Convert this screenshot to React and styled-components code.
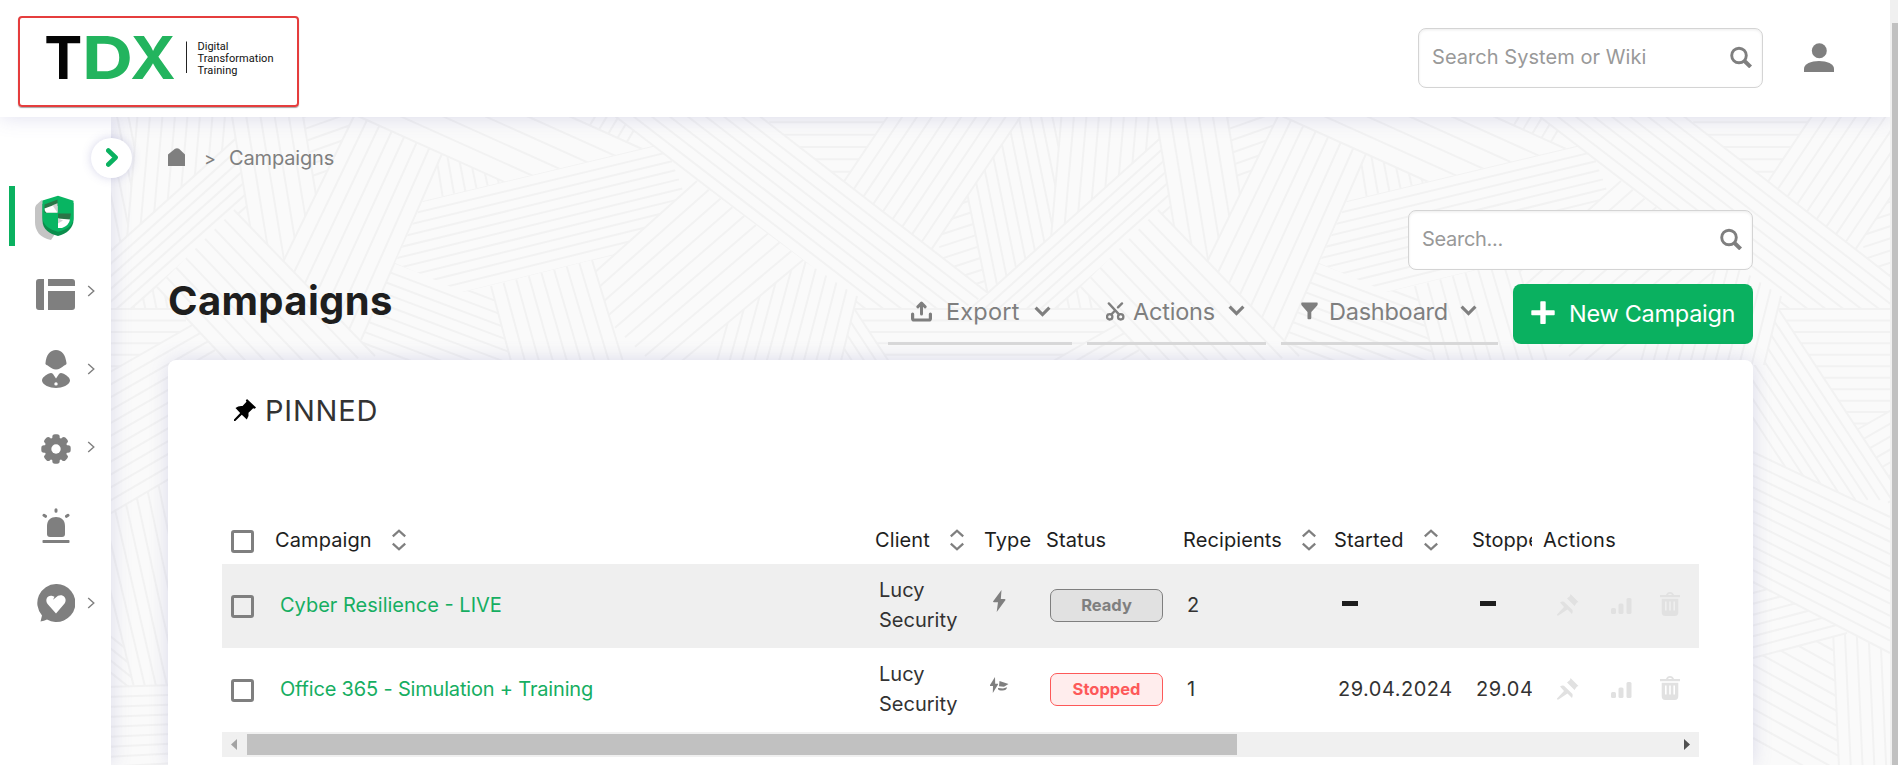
import React from 'react';
import styled, { createGlobalStyle, css } from 'styled-components';

const GlobalStyle = createGlobalStyle`
  *, *::before, *::after { box-sizing: border-box; }
  html, body { margin: 0; padding: 0; height: 100%; overflow: hidden; background: #fafafa; }
  body { font-family: Inter, "Liberation Sans", sans-serif; color: #1e1e1e; }
`;

const gray = '#7f7f7f';
const green = '#0ab160';
const softShadow = '0 0 20px rgba(90, 90, 170, 0.2)';

/* ---------- background pattern ---------- */

const TILE = 924;

// Each band: first line, last line, number of lines, optional outline.
const tileBands = [
  [[765, 110, 890, 110], [790, 184, 890, 184], 7],
  [[935, 212, 978, 198], [945, 294, 988, 280], 8],
  [[950, 110, 991, 310], [1051, 110, 1092, 310], 10],
  [[837, 192, 892, 110], [925, 259, 1025, 110], 10],
  [[1062, 110, 1050, 250], [1162, 110, 1150, 250], 9],
  [[295, 120, 360, 97], [295, 182, 360, 159], 6],
  [[575, 150, 602, 105], [622, 150, 649, 105], 5],
  [[436, 155, 444, 205], [492, 155, 504, 205], 6],
  [[970, 309, 1165, 134], [1050, 313, 1172, 205], 7],
  [[1155, 110, 1180, 262], [1226, 110, 1251, 262], 6],
  [[385, 259, 520, 310], [350, 338, 520, 402], 9],
  [[357, 110, 245, 340], [461, 110, 361, 340], 8],
  [[340, 108, 540, 198], [460, 67, 660, 157], 6],
  [[385, 210, 665, 143], [385, 312, 700, 234], 11, '423,201 665,143 700,234 463,292 395,263'],
  [[598, 103, 910, 343], [740, 101, 988, 293], 9],
  [[850, 309, 1110, 309], [880, 435, 1110, 435], 12],
  [[5, 432, 215, 312], [60, 543, 215, 452], 12],
  [[855, 310, 980, 500], [758, 310, 883, 500], 9],
  [[857, 296, 840, 365], [754, 228, 716, 365], 11],
  [[697, 181, 575, 290], [803, 260, 665, 375], 10],
  [[491, 286, 512, 365], [592, 260, 624, 365], 9],
  [[234, 210, 375, 356], [157, 287, 240, 375], 9],
];

const edgeBands = [
  [[1753, 606, 1838, 653], [1753, 738, 1838, 785], 10],
  [[1833, 630, 1839, 767], [1892, 630, 1898, 767], 6],
  [[1753, 593, 1847, 568], [1753, 658, 1847, 633], 7],
  [[1753, 452, 1890, 517], [1753, 582, 1890, 653], 12],
];

const lowerLeftBands = [
  [[100, 628, 135, 656], [100, 664, 135, 692], 4],
  [[88, 500, 134, 687], [188, 450, 234, 687], 10],
  [[105, 687, 175, 685], [105, 767, 175, 763], 9],
];

function Band({ band, shift = 0 }) {
  const [first, last, count, outline] = band;
  const points =
    outline ||
    `${first[0]},${first[1]} ${first[2]},${first[3]} ${last[2]},${last[3]} ${last[0]},${last[1]}`;
  const id = `band-${first.join('-')}-${shift}`;
  const lines = Array.from({ length: count }, (_, i) => {
    const t = i / (count - 1);
    const [x1, y1, x2, y2] = first.map((v, k) => v + (last[k] - v) * t);
    return `M${x1} ${y1}L${x2} ${y2}`;
  }).join('');
  return (
    <g transform={`translate(${shift} 0)`}>
      <clipPath id={id}><polygon points={points} /></clipPath>
      <polygon points={points} fill="#fafafa" />
      <path d={lines} clipPath={outline ? `url(#${id})` : undefined} stroke="#f2f2f2" strokeWidth="2" fill="none" />
    </g>
  );
}

const Backdrop = styled.svg`
  position: absolute;
  inset: 0;
  z-index: 0;
`;

function Pattern() {
  return (
    <Backdrop width="1898" height="765" viewBox="0 0 1898 765">
      {lowerLeftBands.map((b, i) => <Band key={`l${i}`} band={b} />)}
      {tileBands.map((b, i) =>
        [-TILE, 0, TILE, 2 * TILE].map((s) => <Band key={`${i}-${s}`} band={b} shift={s} />)
      )}
      {edgeBands.map((b, i) => <Band key={`e${i}`} band={b} />)}
    </Backdrop>
  );
}

/* ---------- shell ---------- */

const Page = styled.div`
  position: relative;
  width: 1898px;
  height: 765px;
  overflow: hidden;
  display: flex;
`;
const Shell = styled.div`
  position: relative;
  z-index: 1;
  width: 1890px;
  display: flex;
  flex-direction: column;
`;
const PageScroll = styled.div`
  position: relative;
  z-index: 1;
  width: 8px;
  padding: 23px 0 0 2px;
  background: #f0f0f0;
`;
const PageThumb = styled.div`
  height: 100%;
  background: #c1c1c1;
`;
const Header = styled.header`
  position: relative;
  z-index: 2;
  flex: none;
  height: 117px;
  padding: 16px 56px 0 18px;
  display: flex;
  align-items: flex-start;
  background: #fff;
  box-shadow: ${softShadow};
`;
const LogoFrame = styled.div`
  width: 281px;
  height: 91px;
  border: 2px solid #e53d3d;
  border-radius: 4px;
  box-shadow: 0 1px 1px rgba(0, 0, 0, 0.35);
`;
const Spacer = styled.div`
  flex: 1;
`;
const SearchBox = styled.label`
  width: 345px;
  height: 60px;
  padding: 0 10px 2px 13px;
  display: flex;
  align-items: center;
  justify-content: space-between;
  background: #fff;
  border: 1px solid #d4d4d4;
  border-radius: 8px;
  box-shadow: inset 0 1px 3px rgba(0, 0, 0, 0.08);
  font-size: 20px;
  letter-spacing: ${(p) => p.$track || 0}px;
  color: #999;
`;
const HeaderSearch = styled.div`
  margin: 12px 41px 0 0;
`;
const UserButton = styled.div`
  margin-top: 27px;
  width: 30px;
  display: flex;
`;
const Body = styled.div`
  flex: 1;
  display: flex;
  min-height: 0;
`;

/* ---------- sidebar ---------- */

const Sidebar = styled.nav`
  position: relative;
  width: 111px;
  padding-top: 69px;
  background: #fff;
  box-shadow: ${softShadow};
`;
const SideToggle = styled.div`
  position: absolute;
  left: 91px;
  top: 21px;
  width: 41px;
  height: 40px;
  padding: 0 0 2px 3px;
  border-radius: 50%;
  background: #fff;
  box-shadow: 0 0 10px rgba(90, 90, 170, 0.25);
  display: flex;
  align-items: center;
  justify-content: center;
`;
const ActiveItem = styled.div`
  height: 60px;
  margin: 0 0 6px 9px;
  padding: 3px 0 0 19px;
  display: flex;
  align-items: center;
  border-left: 6px solid ${green};
`;
const SideItem = styled.div`
  height: 78px;
  padding: 0 16px 0 36px;
  display: flex;
  align-items: center;
  justify-content: space-between;
  color: ${gray};
`;
const SideIcon = styled.div`
  width: 39px;
  display: flex;
  justify-content: center;
  padding-top: ${(p) => p.$drop || 0}px;
`;

/* ---------- content ---------- */

const Content = styled.main`
  flex: 1;
  padding: 21px 137px 0 57px;
  display: flex;
  flex-direction: column;
`;
const Crumbs = styled.div`
  height: 40px;
  display: flex;
  align-items: center;
  font-size: 20px;
  color: ${gray};
`;
const CrumbHome = styled.div`
  display: flex;
  padding-bottom: 3px;
`;
const CrumbSep = styled.span`
  margin: 0 12px 0 18px;
  width: 13px;
  font-size: 18px;
`;
const CrumbText = styled.span`
  letter-spacing: -0.15px;
`;
const SearchRow = styled.div`
  margin-top: 32px;
  display: flex;
  justify-content: flex-end;
`;
const TitleRow = styled.div`
  margin-top: 14px;
  height: 61px;
  display: flex;
  align-items: flex-start;
`;
const Title = styled.h1`
  margin: -7px auto 0 0;
  font-size: 40px;
  line-height: 48px;
  font-weight: 650;
  letter-spacing: 0.35px;
`;
const ToolButton = styled.div`
  width: ${(p) => p.$width}px;
  height: 61px;
  margin-right: 15px;
  padding: 0 ${(p) => p.$end}px ${(p) => p.$lift}px ${(p) => p.$pad}px;
  border-bottom: 3px solid #d9d9d9;
  display: flex;
  align-items: center;
  font-size: 23.5px;
  letter-spacing: ${(p) => p.$track || 0}px;
  color: ${gray};
  white-space: nowrap;
`;
const ToolLabel = styled.span`
  flex: 1;
  margin-left: ${(p) => p.$left}px;
`;
const NewButton = styled.div`
  width: 240px;
  height: 60px;
  padding: 0 0 2px 18px;
  display: flex;
  align-items: center;
  gap: 14px;
  border-radius: 8px;
  background: ${green};
  color: #fff;
  font-size: 23.5px;
  letter-spacing: -0.28px;
  white-space: nowrap;
`;
const Card = styled.section`
  margin-top: 15px;
  flex: 1;
  padding: 36px 54px 0;
  background: #fff;
  border-radius: 8px 8px 0 0;
  box-shadow: ${softShadow};
`;
const CardHead = styled.div`
  height: 28px;
  padding-left: 12px;
  display: flex;
  align-items: center;
  gap: 9px;
  font-size: 29px;
  letter-spacing: 0.8px;
  color: #333;
`;

/* ---------- table ---------- */

const grid = css`
  display: grid;
  grid-template-columns: 53px 600px 109px 62px 137px 151px 138px 60px 167px;
  align-items: center;
`;
const HeadRow = styled.div`
  ${grid}
  margin-top: 92px;
  height: 48px;
  font-size: 20px;
`;
const Row = styled.div`
  ${grid}
  height: 84px;
  padding-bottom: 2px;
  background: ${(p) => (p.$shade ? '#efefef' : '#fff')};
  font-size: 20px;
  line-height: 30px;
  color: #333;
`;
const HeadCell = styled.div`
  display: flex;
  align-items: center;
  gap: 20px;
  padding-left: ${(p) => p.$indent || 0}px;
  letter-spacing: ${(p) => p.$track || 0.1}px;
  overflow: hidden;
  white-space: nowrap;
`;
const Cell = styled.div`
  padding-left: ${(p) => (p.$indent === undefined ? 4 : p.$indent)}px;
  letter-spacing: ${(p) => p.$track || 0}px;
  overflow: hidden;
  white-space: ${(p) => (p.$wrap ? 'normal' : 'nowrap')};
`;
const Name = styled(Cell)`
  color: #16ae62;
`;
const Check = styled.div`
  width: 23px;
  height: 23px;
  margin: 3px 0 0 9px;
  border: 3px solid ${gray};
  border-radius: 3px;
`;
const TypeIcon = styled.div`
  display: flex;
  padding: 0 0 8px ${(p) => p.$indent}px;
`;
const Badge = styled.div`
  width: 113px;
  height: 33px;
  margin: 0 0 0 4px;
  display: flex;
  align-items: center;
  justify-content: center;
  border: 1px solid currentColor;
  border-radius: 7px;
  font-size: 16.5px;
  font-weight: 700;
  color: ${(p) => (p.$stopped ? '#fd5959' : gray)};
  background: ${(p) => (p.$stopped ? '#ffeded' : '#e1e1e1')};
`;
const Dash = styled.div`
  width: 16px;
  height: 5px;
  margin: 0 0 3px ${(p) => p.$left}px;
  background: #1e1e1e;
`;
const RowActions = styled.div`
  display: flex;
  align-items: center;
  padding-left: 25px;
  color: #e1e1e1;
`;
const ActionIcon = styled.div`
  display: flex;
  margin: ${(p) => p.$top || 0}px ${(p) => p.$right || 0}px 0 0;
`;
const TableScroll = styled.div`
  height: 25px;
  padding: 2px 9px 2px 9px;
  display: flex;
  align-items: center;
  background: #f0f0f0;
`;
const TableThumb = styled.div`
  width: 990px;
  height: 21px;
  margin: 0 auto 0 10px;
  background: #c1c1c1;
`;

/* ---------- icons ---------- */

const Logo = () => (
  <svg width="277" height="87" viewBox="20 18 277 87">
    <g fontFamily="Inter, sans-serif" fontWeight="650" fontSize="59.5">
      <text x="44.3" y="79.2" fill="#050505" fontWeight="700" textLength="38" lengthAdjust="spacingAndGlyphs">T</text>
      <text x="82" y="79.2" fill="#23b45e" textLength="51" lengthAdjust="spacingAndGlyphs">D</text>
      <text x="130.200" y="79.2" fill="#23b45e" textLength="45.500" lengthAdjust="spacingAndGlyphs">X</text>
    </g>
    <path d="M186.500 41.500V73" stroke="#222" strokeWidth="1" />
    <g fontFamily="Roboto, sans-serif" fontSize="11" fill="#111">
      <text x="197.500" y="49.700" textLength="31">Digital</text>
      <text x="197.500" y="61.700" textLength="76">Transformation</text>
      <text x="197.500" y="73.700" textLength="40">Training</text>
    </g>
  </svg>
);
const SearchIcon = () => (
  <svg width="22" height="22" viewBox="0 0 22 22" fill="none" stroke={gray}>
    <circle cx="9" cy="9.500" r="7.300" strokeWidth="2.900" />
    <path d="M14 14.500l6.600 6.400" strokeWidth="4" />
  </svg>
);
const UserIcon = () => (
  <svg width="30" height="30" viewBox="0 0 30 30" fill={gray}>
    <circle cx="15.300" cy="7.800" r="7.500" />
    <path d="M0 29v-3.500C0 21 7 18 15 18s15 3 15 7.500V29z" />
  </svg>
);
const ToggleIcon = () => (
  <svg width="14" height="19" viewBox="0 0 14 19" fill="none" stroke={green} strokeWidth="4.600">
    <path d="M2.300 2.500l7.300 7-7.300 7" strokeLinejoin="round" strokeLinecap="round" />
  </svg>
);
const SmallChevron = () => (
  <svg width="8" height="12" viewBox="0 0 8 12" fill="none" stroke={gray} strokeWidth="1.400">
    <path d="M1.200 1l5.600 5-5.600 5" />
  </svg>
);
const DownChevron = () => (
  <svg width="17" height="12" viewBox="0 0 17 12" fill="none" stroke={gray} strokeWidth="3.100">
    <path d="M1.600 1.600l6.900 7 6.900-7" />
  </svg>
);
const ShieldIcon = () => (
  <svg width="41" height="46" viewBox="0 0 41 46">
    <path d="M1 13Q1 10 8 5l17 28-8 12C6 43 1 36 1 27z" fill="#c4c4c4" />
    <path d="M8.500 9L24 5l15.500 3v17c0 8-7 14-15.500 16-8.500-2-15.500-7-15.500-15z" fill="#0b8d4c" />
    <path d="M8.500 5.500L24 .8l15.500 5v17c0 8-7 12-15.500 14-8.500-2-15.500-7-15.500-14z" fill="#08b562" />
    <path d="M10.500 9.500L23.500 4.500v13.300h-13z" fill="#2b7547" />
    <path d="M10.500 13.500L20 10l3.500 1v6.800H12.500q-2-1-2-4.300z" fill="#fff" />
    <path d="M18.500 10.300l5-2v9.500z" fill="#d3d3d3" />
    <path d="M24 18.500H37q0 9-13 14.500z" fill="#2b7547" />
    <path d="M24 23.500l12 1q-1 6-8 8.500h-4z" fill="#fff" />
    <path d="M24 23.500l5 2-5 3z" fill="#d3d3d3" />
  </svg>
);
const LayoutIcon = () => (
  <svg width="39" height="31" viewBox="0 0 39 31" fill="currentColor">
    <path d="M3 0h5v31H3q-3 0-3-3V3q0-3 3-3zM12 0h24q3 0 3 3v4H12zM12 12h27v16q0 3-3 3H12z" />
  </svg>
);
const PersonIcon = () => (
  <svg width="28" height="38" viewBox="0 0 28 38" fill="currentColor">
    <path d="M14 0c6 0 9.500 5 10.500 13 .3 2-2 2-3.500 3.500-2 1.500-4 3-7 3s-5-1.500-7-3C5.500 15 3 15 3.500 13 4.300 5 8 0 14 0z" />
    <path fillRule="evenodd" d="M7 23.500c1.500-.8 3-.8 4 .5l3 4.500 3-4.500c1-1.300 2.500-1.300 4-.5 3 1.500 7 4 7 7C28 35 20 38 14 38S0 35 0 30.500c0-3 4-5.500 7-7zM14 32.200a1.700 1.700 0 100 3.400 1.700 1.700 0 000-3.400z" />
  </svg>
);
const GearIcon = () => (
  <svg width="30" height="30" viewBox="0 0 30 30">
    <g fill="currentColor">
      <circle cx="15" cy="15" r="11.500" />
      {[0, 45, 90, 135].map((a) => (
        <rect key={a} x="11.300" y=".3" width="7.400" height="29.400" rx="2.600" transform={`rotate(${a} 15 15)`} />
      ))}
    </g>
    <circle cx="15" cy="15" r="4.700" fill="#fff" />
  </svg>
);
const AlarmIcon = () => (
  <svg width="28" height="35" viewBox="0 0 28 35" fill="currentColor">
    <path d="M5 26V18C5 12 9 9 14 9s9 3 9 9v8q0 3-3 3H8q-3 0-3-3z" />
    <rect x=".5" y="32" width="27" height="3" rx=".8" />
    <path d="M14 1.700v1.500M2 7.300l1.500 1M26 7.300l-1.500 1" stroke="currentColor" strokeWidth="3" strokeLinecap="round" />
  </svg>
);
const HeartIcon = () => (
  <svg width="38" height="38" viewBox="0 0 38 38">
    <path d="M19 0a19 19 0 11-9 35.500Q7 37 3.500 37.500L5 31.500A19 19 0 0119 0z" fill="currentColor" />
    <path d="M19 29.500l-8-9C7 15.500 11 10.500 15.500 12l2 .8-1.500 3 5-4c4-2 8.500 1 7.500 5.500-.3 1.500-1 2.500-2 3.500z" fill="#fff" />
  </svg>
);
const HomeIcon = () => (
  <svg width="18" height="18" viewBox="0 0 18 18" fill={gray}>
    <path d="M0 6.500L7 .8q2-1.200 4 0l6 5.700V18H0z" />
  </svg>
);
const ExportIcon = () => (
  <svg width="21" height="21" viewBox="0 0 21 21" fill="none" stroke={gray} strokeLinecap="round" strokeLinejoin="round">
    <path d="M1.600 13v4.500q0 1.500 1.500 1.500h14.800q1.500 0 1.500-1.500V13" strokeWidth="3.200" />
    <path d="M10.500 13V3M6.800 5.800l3.700-3.600 3.700 3.600" strokeWidth="3" />
  </svg>
);
const ScissorsIcon = () => (
  <svg width="19" height="19" viewBox="0 0 19 19" fill="none" stroke={gray} strokeLinecap="round">
    <circle cx="3.700" cy="14.800" r="2.700" strokeWidth="2.300" />
    <circle cx="14.700" cy="14.800" r="2.700" strokeWidth="2.300" />
    <path d="M2.800 1.400l10.200 11M5.400 12.400l3-3.200M12 5.400l4-4" strokeWidth="2.300" />
  </svg>
);
const FunnelIcon = () => (
  <svg width="17" height="18" viewBox="0 0 17 18" fill={gray}>
    <path d="M1 .5h15q.8 0 .7 1.200 0 1.300-.7 2L10.300 10v6q0 1-.9 1.200H7.300q-.8 0-.8-1V10L1 3.700Q.3 3 .2 1.700.2.500 1 .5z" />
  </svg>
);
const PlusIcon = () => (
  <svg width="24" height="24" viewBox="0 0 24 24" fill="#fff">
    <path d="M9.300 1q0-.7.700-.7h4q.7 0 .7.700v8.300H23q.7 0 .7.700v3.500q0 .7-.7.700h-8.300v8q0 .7-.7.700h-4q-.7 0-.7-.7v-8H1q-.7 0-.7-.7V10q0-.7.700-.7h8.300z" />
  </svg>
);
const PinIcon = () => (
  <svg width="22" height="22" viewBox="0 0 22 22" fill="#000">
    <path d="M13 0l9 8.500-1.300 1.300-1.500-.5-4.700 4.500q.8 3.500-1.700 6.700l-5-4.700L1.300 22H0v-1.500l6.200-6.600L1.500 9q3-2.500 7-2l4-4.300-.7-1.300z" />
  </svg>
);
const UnpinIcon = () => (
  <svg width="22" height="22" viewBox="0 0 22 22" fill="currentColor">
    <path d="M13.500 0l8 8-1.500.5-2.500 3.500-7.500-7.500 3-2.500zM3 8.500q2.200-1.500 4-.8L15.500 16q.5 2.500-.5 4L10.500 15.500 1.500 21.500 0 21.500 0 20.500 7 13z" />
  </svg>
);
const BarsIcon = () => (
  <svg width="21" height="16" viewBox="0 0 21 16" fill="currentColor">
    <rect y="10" width="5" height="6" rx="1.500" />
    <rect x="7.500" y="5.500" width="5" height="10.500" rx="1.500" />
    <rect x="15.500" width="5" height="16" rx="1.500" />
  </svg>
);
const TrashIcon = () => (
  <svg width="20" height="24" viewBox="0 0 20 24" fill="currentColor">
    <path d="M0 3h6q1-3 4-3t4 3h6v2.200H0zM8 3h4q-.6-1.200-2-1.200T8 3z" fillRule="evenodd" />
    <path fillRule="evenodd" d="M1.700 6.700h16.600V20q0 4-3.500 4H5.200q-3.500 0-3.500-4zM5 9.500v9h1.600v-9zM9.200 9.500v9h1.600v-9zM13.400 9.500v9H15v-9z" />
  </svg>
);
const SortIcon = () => (
  <svg width="14" height="22" viewBox="0 0 14 22" fill="none" stroke={gray} strokeWidth="2.300">
    <path d="M.8 7.300L7 1.700l6.200 5.600M.8 14.700L7 20.300l6.200-5.600" />
  </svg>
);
const BoltIcon = () => (
  <svg width="13" height="22" viewBox="0 0 13 22" fill={gray}>
    <path d="M8.500 0L0 11.500q0 .8 1 .8h4L3.700 22 12.500 10q0-1-1-1H7.800z" />
  </svg>
);
const BoltHatIcon = () => (
  <svg width="19" height="16" viewBox="0 0 19 16" fill={gray}>
    <path d="M5 0L0 8v1h3L2.800 16 8 7.500V6.800H5.200z" />
    <path d="M9.500 4L18.500 7 14 9.800 9 9.200zM8 11l5 .5 4-1.200q-.5 3.200-4.500 3.200T8 12z" />
  </svg>
);
const ArrowLeft = () => (
  <svg width="6" height="11" viewBox="0 0 6 11"><path d="M6 0v11L0 5.500z" fill="#a3a3a3" /></svg>
);
const ArrowRight = () => (
  <svg width="6" height="11" viewBox="0 0 6 11"><path d="M0 0v11l6-5.500z" fill="#505050" /></svg>
);

/* ---------- sections ---------- */

const sideItems = [
  { Icon: LayoutIcon, drop: 6, more: true },
  { Icon: PersonIcon, drop: 0, more: true },
  { Icon: GearIcon, drop: 4, more: true },
  { Icon: AlarmIcon, drop: 0, more: false },
  { Icon: HeartIcon, drop: 0, more: true },
];

const campaigns = [
  {
    name: 'Cyber Resilience - LIVE', track: 0, client: 'Lucy Security', status: 'Ready',
    recipients: '2', Icon: BoltIcon, iconIndent: 9,
  },
  {
    name: 'Office 365 - Simulation + Training', track: -0.18, client: 'Lucy Security', status: 'Stopped',
    recipients: '1', started: '29.04.2024', stopped: '29.04.2024', Icon: BoltHatIcon, iconIndent: 6,
  },
];

function CampaignRow({ item, shade }) {
  const { Icon } = item;
  return (
    <Row $shade={shade}>
      <Check />
      <Name $indent={5} $track={item.track}>{item.name}</Name>
      <Cell $wrap>{item.client}</Cell>
      <TypeIcon $indent={item.iconIndent}><Icon /></TypeIcon>
      <Badge $stopped={item.status === 'Stopped'}>{item.status}</Badge>
      <Cell>{item.recipients}</Cell>
      {item.started ? <Cell $track={0.5}>{item.started}</Cell> : <Dash $left={8} />}
      {item.stopped ? <Cell $track={0.5}>{item.stopped}</Cell> : <Dash $left={8} />}
      <RowActions>
        <ActionIcon $right={32} $top={-1}><UnpinIcon /></ActionIcon>
        <ActionIcon $right={28} $top={1}><BarsIcon /></ActionIcon>
        <ActionIcon $top={-3}><TrashIcon /></ActionIcon>
      </RowActions>
    </Row>
  );
}

export default function App() {
  return (
    <Page>
      <GlobalStyle />
      <Pattern />
      <Shell>
        <Header>
          <LogoFrame><Logo /></LogoFrame>
          <Spacer />
          <HeaderSearch>
            <SearchBox $track={0.05}>Search System or Wiki<SearchIcon /></SearchBox>
          </HeaderSearch>
          <UserButton><UserIcon /></UserButton>
        </Header>
        <Body>
          <Sidebar>
            <ActiveItem><ShieldIcon /></ActiveItem>
            {sideItems.map(({ Icon, drop, more }, i) => (
              <SideItem key={i}>
                <SideIcon $drop={drop}><Icon /></SideIcon>
                {more && <SmallChevron />}
              </SideItem>
            ))}
            <SideToggle><ToggleIcon /></SideToggle>
          </Sidebar>
          <Content>
            <Crumbs>
              <CrumbHome><HomeIcon /></CrumbHome>
              <CrumbSep>&gt;</CrumbSep>
              <CrumbText>Campaigns</CrumbText>
            </Crumbs>
            <SearchRow>
              <SearchBox $track={-0.3}>Search...<SearchIcon /></SearchBox>
            </SearchRow>
            <TitleRow>
              <Title>Campaigns</Title>
              <ToolButton $width={184} $end={21} $pad={23} $lift={3} $track={0.2}>
                <ExportIcon /><ToolLabel $left={14}>Export</ToolLabel><DownChevron />
              </ToolButton>
              <ToolButton $width={179} $end={21} $pad={19} $lift={4} $track={-0.2}>
                <ScissorsIcon /><ToolLabel $left={8}>Actions</ToolLabel><DownChevron />
              </ToolButton>
              <ToolButton $width={217} $end={21} $pad={20} $lift={4} $track={-0.25}>
                <FunnelIcon /><ToolLabel $left={11}>Dashboard</ToolLabel><DownChevron />
              </ToolButton>
              <NewButton><PlusIcon />New Campaign</NewButton>
            </TitleRow>
            <Card>
              <CardHead><PinIcon />PINNED</CardHead>
              <HeadRow>
                <Check />
                <HeadCell>Campaign<SortIcon /></HeadCell>
                <HeadCell>Client<SortIcon /></HeadCell>
                <HeadCell>Type</HeadCell>
                <HeadCell>Status</HeadCell>
                <HeadCell>Recipients<SortIcon /></HeadCell>
                <HeadCell>Started<SortIcon /></HeadCell>
                <HeadCell>Stopped</HeadCell>
                <HeadCell $indent={11} $track={0.3}>Actions</HeadCell>
              </HeadRow>
              {campaigns.map((c, i) => (
                <CampaignRow key={c.name} item={c} shade={i % 2 === 0} />
              ))}
              <TableScroll><ArrowLeft /><TableThumb /><ArrowRight /></TableScroll>
            </Card>
          </Content>
        </Body>
      </Shell>
      <PageScroll><PageThumb /></PageScroll>
    </Page>
  );
}
